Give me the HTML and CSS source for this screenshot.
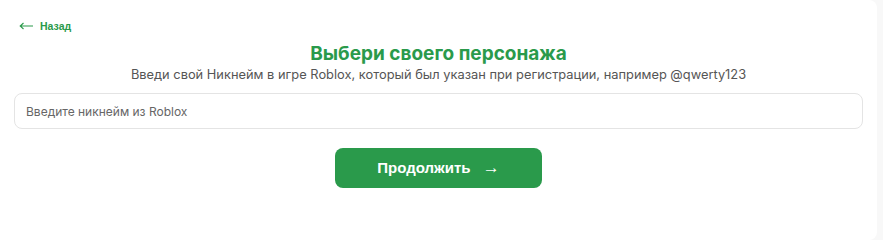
FILE: index.html
```html
<!DOCTYPE html>
<html lang="ru">
<head>
<meta charset="utf-8">
<link rel="stylesheet" href="styles.css">
</head>
<body>
<div class="card">
  <div class="top">
    <button class="back"><svg class="back-arrow" width="14" height="8" viewBox="0 0 14 8"><path d="M14 4H1.5M4.5 1L1.2 4L4.5 7" fill="none" stroke="#2a9a4b" stroke-width="1.1"/></svg> Назад</button>
  </div>
  <h1 class="title">Выбери своего персонажа</h1>
  <p class="subtitle">Введи свой Никнейм в игре Roblox, который был указан при регистрации, например @qwerty123</p>
  <input class="nick" type="text" placeholder="Введите никнейм из Roblox">
  <div class="actions">
    <button class="next">Продолжить <span class="next-arrow">→</span></button>
  </div>
</div>
</body>
</html>
```
FILE: styles.css
```css
html, body {
  margin: 0;
  padding: 0;
  background: #f8f8f8;
  height: 240px;
  overflow: hidden;
}
.card {
  width: 849px;
  height: 240px;
  background: #ffffff;
  border-radius: 0 8px 8px 0;
  padding: 0 14px 0 14px;
  font-family: Inter, "Noto Sans", sans-serif;
  box-sizing: content-box;
}
.top {
  padding-top: 17px;
  height: 18px;
  display: flex;
  align-items: center;
}
.back {
  border: 0;
  background: none;
  padding: 0 0 0 5px;
  margin: 0;
  color: #2a9a4b;
  font-family: "Liberation Sans", Arial, sans-serif;
  font-weight: bold;
  font-size: 10.5px;
  display: flex;
  align-items: center;
  gap: 7px;
  cursor: pointer;
}
.back-arrow {
  display: block;
}
.title {
  margin: 7px 0 0 0;
  text-align: center;
  font-size: 19px;
  line-height: 24px;
  font-weight: 700;
  color: #2a9a4b;
}
.subtitle {
  margin: 0 0 9px 0;
  text-align: center;
  font-size: 12.85px;
  line-height: 18px;
  color: #555555;
}
.nick {
  display: block;
  width: 100%;
  box-sizing: border-box;
  height: 36px;
  border: 1px solid #e4e4e4;
  border-radius: 8px;
  padding: 0 11px;
  font-family: Inter, "Noto Sans", sans-serif;
  font-size: 12px;
  color: #333;
  outline: none;
}
.nick::placeholder {
  color: #666666;
}
.actions {
  display: flex;
  justify-content: center;
  margin-top: 19px;
}
.next {
  width: 207px;
  height: 40px;
  border: 0;
  border-radius: 8px;
  background: #2a9a4b;
  color: #ffffff;
  font-family: "Liberation Sans", Arial, sans-serif;
  font-weight: bold;
  font-size: 15px;
  cursor: pointer;
}
.next-arrow {
  margin-left: 8px;
  font-weight: normal;
  font-size: 17px;
}
```
